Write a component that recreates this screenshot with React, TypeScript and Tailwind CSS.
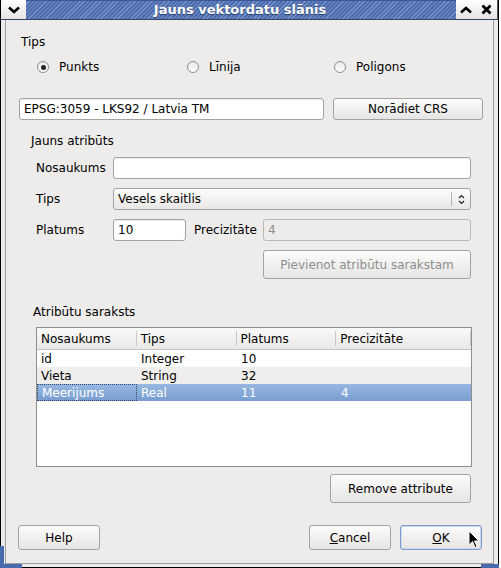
import type { ReactNode } from "react";

const font = { fontFamily: '"DejaVu Sans", Verdana, sans-serif' };

function Radio({ label, checked }: { label: string; checked?: boolean }) {
  return (
    <div className="flex items-center gap-[10px]">
      <div className="w-[12px] h-[12px] rounded-full border border-[#8c8c8c] bg-gradient-to-b from-[#e9e9e9] to-white flex items-center justify-center">
        {checked && <div className="w-[5px] h-[5px] rounded-full bg-[#222]" />}
      </div>
      <span>{label}</span>
    </div>
  );
}

function Button({
  children,
  className = "",
  disabled,
  isDefault,
}: {
  children: ReactNode;
  className?: string;
  disabled?: boolean;
  isDefault?: boolean;
}) {
  return (
    <div
      className={`flex items-center justify-center rounded-[3px] border bg-gradient-to-b from-[#fcfcfc] to-[#e6e5e3] ${
        isDefault
          ? "border-[#7f9bc9] shadow-[inset_0_0_0_1px_#c9d8ef]"
          : "border-[#a3a3a3]"
      } ${disabled ? "text-[#8d8d8d]" : "text-black"} ${className}`}
    >
      {children}
    </div>
  );
}

function Input({
  value,
  className = "",
  disabled,
}: {
  value?: string;
  className?: string;
  disabled?: boolean;
}) {
  return (
    <div
      className={`h-[22px] flex items-center px-[4px] rounded-[3px] border ${
        disabled
          ? "border-[#b8b8b8] bg-[#edeceb] text-[#8d8d8d]"
          : "border-[#a3a3a3] bg-white shadow-[inset_0_1px_1px_rgba(0,0,0,0.08)]"
      } ${className}`}
    >
      {value}
    </div>
  );
}

const columns = ["Nosaukums", "Tips", "Platums", "Precizitāte"];
const fields = [
  { name: "id", type: "Integer", width: "10", prec: "" },
  { name: "Vieta", type: "String", width: "32", prec: "" },
  { name: "Meerijums", type: "Real", width: "11", prec: "4" },
];

export default function App() {
  return (
    <div className="w-[501px] h-[568px] bg-white text-[12px] text-black" style={font}>
      <div className="relative w-[499px] h-[568px] flex flex-col border-l border-r border-b border-black bg-[#edeceb]">
        {/* title bar */}
        <div className="h-[20px] flex border-b border-[#34456b]">
          <div className="w-[25px] flex items-center justify-center rounded-tl-[4px] bg-gradient-to-b from-white to-[#e4e4e4]">
            <svg width="12" height="8" viewBox="0 0 12 8">
              <path d="M1 1.5 L6 6 L11 1.5" fill="none" stroke="#000" strokeWidth="2.6" />
            </svg>
          </div>
          <div className="flex-1 flex items-center justify-center border-t border-[#3d5894] bg-[repeating-linear-gradient(135deg,#4f6eaf_0px,#4f6eaf_2px,#7590c8_2px,#7590c8_3px)]">
            <span className="text-[13px] font-bold text-white [text-shadow:0_1px_1px_#263a66] ml-[-2px]">
              Jauns vektordatu slānis
            </span>
          </div>
          <div className="w-[42px] flex bg-gradient-to-b from-white to-[#e4e4e4] border-r border-[#555]">
            <div className="w-[21px] flex items-center justify-center">
              <svg width="12" height="8" viewBox="0 0 12 8">
                <path d="M1 6.5 L6 2 L11 6.5" fill="none" stroke="#000" strokeWidth="2.6" />
              </svg>
            </div>
            <div className="w-[21px] flex items-center justify-center">
              <svg width="11" height="11" viewBox="0 0 11 11">
                <path d="M1.5 1.5 L9.5 9.5 M9.5 1.5 L1.5 9.5" stroke="#000" strokeWidth="2.8" />
              </svg>
            </div>
          </div>
        </div>

        {/* dialog body */}
        <div className="flex-1 px-[4px] pb-[3px] flex">
          <div className="flex-1 flex flex-col border-l border-r border-b border-[#9c9c9c]">
            <div className="ml-[15px] mt-[14px] leading-[16px]">Tips</div>
            <div className="mt-[9px] ml-[31px] flex leading-[16px]">
              <div className="w-[150px]">
                <Radio label="Punkts" checked />
              </div>
              <div className="w-[147px]">
                <Radio label="Līnija" />
              </div>
              <Radio label="Poligons" />
            </div>

            <div className="mt-[23px] ml-[13px] flex gap-[9px]">
              <Input value="EPSG:3059 - LKS92 / Latvia TM" className="w-[305px]" />
              <Button className="w-[150px] h-[22px]">Norādiet CRS</Button>
            </div>

            <div className="mt-[13px] ml-[25px] leading-[16px]">Jauns atribūts</div>
            <div className="mt-[8px] ml-[30px] flex items-center">
              <span className="w-[77px]">Nosaukums</span>
              <Input className="w-[358px]" />
            </div>
            <div className="mt-[9px] ml-[30px] flex items-center">
              <span className="w-[77px]">Tips</span>
              <div className="w-[358px] h-[22px] flex items-center rounded-[3px] border border-[#a3a3a3] bg-gradient-to-b from-[#fcfcfc] to-[#e8e7e5]">
                <span className="flex-1 pl-[4px]">Vesels skaitlis</span>
                <div className="w-px h-[14px] bg-[#b5b5b5]" />
                <div className="w-[18px] flex justify-center">
                  <svg width="7" height="11" viewBox="0 0 7 11">
                    <path d="M1 4 L3.5 1.5 L6 4 M1 7 L3.5 9.5 L6 7" fill="none" stroke="#222" strokeWidth="1.2" />
                  </svg>
                </div>
              </div>
            </div>
            <div className="mt-[9px] ml-[30px] flex items-center">
              <span className="w-[77px]">Platums</span>
              <Input value="10" className="w-[73px]" />
              <span className="w-[77px] pl-[8px]">Precizitāte</span>
              <Input value="4" disabled className="w-[208px]" />
            </div>
            <Button disabled className="mt-[9px] ml-[257px] w-[208px] h-[29px]">
              Pievienot atribūtu sarakstam
            </Button>

            <div className="mt-[25px] ml-[27px] leading-[16px]">Atribūtu saraksts</div>
            <div className="mt-[7px] ml-[30px] w-[436px] h-[140px] border border-[#8e8e8e] bg-white flex flex-col">
              <div className="h-[22px] flex border-b border-[#c4c4c4] bg-gradient-to-b from-[#f9f9f9] to-[#e9e8e6]">
                {columns.map((c) => (
                  <div key={c} className="w-[100px] last:w-[135px] flex items-center">
                    <span className="flex-1 pl-[4px]">{c}</span>
                    <div className="w-px h-[15px] bg-[#c9c9c9]" />
                  </div>
                ))}
              </div>
              {fields.map((f, i) => {
                const selected = i === 2;
                return (
                  <div
                    key={f.name}
                    className={`h-[17px] flex items-center ${
                      selected
                        ? "bg-gradient-to-b from-[#98b8e2] to-[#789dd0] text-white"
                        : i % 2
                          ? "bg-[#efeeed]"
                          : "bg-white"
                    }`}
                  >
                    <span
                      className={`w-[100px] h-full flex items-center pl-[4px] ${
                        selected ? "border border-dotted border-[#34456b] pl-[3px]" : ""
                      }`}
                    >
                      {f.name}
                    </span>
                    <span className="w-[100px] pl-[4px]">{f.type}</span>
                    <span className="w-[100px] pl-[4px]">{f.width}</span>
                    <span className="pl-[4px]">{f.prec}</span>
                  </div>
                );
              })}
            </div>

            <Button className="mt-[7px] ml-[324px] w-[141px] h-[29px]">Remove attribute</Button>

            <div className="mt-[22px] ml-[12px] flex">
              <Button className="w-[82px] h-[25px]">Help</Button>
              <Button className="ml-[209px] w-[82px] h-[25px]">
                <span>
                  <span className="underline">C</span>ancel
                </span>
              </Button>
              <Button isDefault className="ml-[9px] w-[82px] h-[25px]">
                <span>
                  <span className="underline">O</span>K
                </span>
              </Button>
            </div>
          </div>
        </div>

        {/* resize corners */}
        <div className="absolute left-[-1px] bottom-[-1px] w-[22px] h-[22px] border-l-[4px] border-b-[4px] border-[#4a6ab0]" />
        <div className="absolute right-[-1px] bottom-[-1px] w-[18px] h-[5px] border-b-[4px] border-[#4a6ab0]" />

        {/* mouse pointer */}
        <svg className="absolute left-[467px] top-[530px]" width="12" height="20" viewBox="0 0 12 20">
          <path d="M1 1 L1 15 L4.5 11.5 L7 17.5 L9 16.5 L6.5 11 L11 11 Z" fill="#000" stroke="#fff" strokeWidth="1" />
        </svg>
      </div>
    </div>
  );
}
